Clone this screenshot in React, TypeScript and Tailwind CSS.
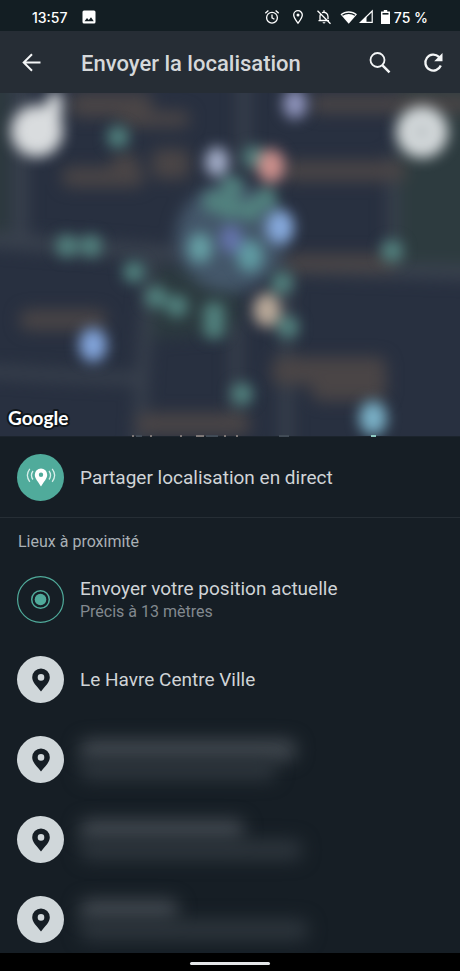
import type { ReactNode } from 'react';

const LABELS = [
  { x: 70, y: 0, w: 82, h: 24 },
  { x: 120, y: 18, w: 70, h: 16 },
  { x: 112, y: 60, w: 26, h: 24 },
  { x: 152, y: 56, w: 38, h: 30 },
  { x: 62, y: 74, w: 82, h: 20 },
  { x: 310, y: 2, w: 90, h: 18 },
  { x: 390, y: 2, w: 84, h: 18 },
  { x: 284, y: 68, w: 122, h: 20 },
  { x: 286, y: 161, w: 110, h: 18 },
  { x: 20, y: 217, w: 86, h: 20 },
  { x: 272, y: 264, w: 114, h: 28 },
  { x: 312, y: 280, w: 74, h: 28 },
  { x: 136, y: 320, w: 114, h: 22 },
];

const DOTS = [
  [118, 44], [67, 153], [91, 153], [134, 179], [156, 204], [177, 213],
  [214, 220], [214, 235], [242, 301], [288, 234], [282, 190], [392, 158],
  [254, 64], [232, 94], [214, 109], [230, 115], [250, 117], [266, 106],
];

const PINS = [
  { x: 295, y: 11, r: 12, fill: '#9095bd' },
  { x: 217, y: 69, r: 12, fill: '#a3adc8' },
  { x: 271, y: 73, r: 14, fill: '#cb8f8b' },
  { x: 280, y: 134, r: 14, fill: '#86a9dc' },
  { x: 93, y: 252, r: 14, fill: '#82a4da' },
  { x: 267, y: 217, r: 14, fill: '#b8a898' },
  { x: 373, y: 325, r: 14, fill: '#7ab0c6' },
  { x: 200, y: 155, r: 12, fill: '#66a0a5' },
  { x: 250, y: 163, r: 13, fill: '#609ba2' },
  { x: 231, y: 146, r: 11, fill: '#6473ab' },
];

const HIDDEN_PLACES = [
  { id: 'a', title: 'w-[216px]', address: 'w-[196px]' },
  { id: 'b', title: 'w-[164px]', address: 'w-[222px]' },
  { id: 'c', title: 'w-[98px]', address: 'w-[228px]' },
];

function StatusBar() {
  return (
    <div className="flex h-[31px] shrink-0 items-center justify-between bg-[#131e23] pr-8 pl-8 pt-1 font-['Inter','Roboto',sans-serif] text-sm font-medium text-white">
      <div className="flex items-center gap-[14px]">
        <span>13:57</span>
        <svg width="14" height="16" viewBox="0 0 14 16" aria-hidden="true">
          <rect x="0.5" y="0.5" width="13" height="13" rx="1.5" fill="#fff" />
          <path d="M2.5 11.3 5 8l1.8 2L9 7.2l2.8 4.1z" fill="#131e23" />
        </svg>
      </div>
      <div className="flex items-center">
        <svg width="16" height="18" viewBox="0 0 16 18" fill="none" stroke="#fff" strokeWidth="1.3" className="mr-3" aria-hidden="true">
          <circle cx="9" cy="8.7" r="5.4" />
          <path d="M9 5.5v3.4l2.4 1.4M2.3 4.2 5.4 1.6M15.7 4.2l-3.1-2.6" />
        </svg>
        <svg width="12" height="18" viewBox="0 0 12 18" fill="none" stroke="#fff" strokeWidth="1.3" className="mr-3" aria-hidden="true">
          <path d="M7 14.2C4.6 11 2.7 8.5 2.7 6a4.3 4.3 0 0 1 8.6 0c0 2.5-1.9 5-4.3 8.2z" />
          <circle cx="7" cy="6" r="1.5" fill="#fff" stroke="none" />
        </svg>
        <svg width="16" height="18" viewBox="0 0 16 18" fill="none" stroke="#fff" strokeWidth="1.3" className="mr-2 overflow-visible" aria-hidden="true">
          <path d="M5.3 5.5C5 6.2 5 7 5 7.5v4h8.5M3.5 11.7H14M7 3.8C9.5 2.4 13 4 13 7.5V10M9 1.3V3M2.5 1.8l13 13" />
          <path d="M7.6 13.2h2.8c0 1.6-2.8 1.6-2.8 0z" fill="#fff" stroke="none" />
        </svg>
        <svg width="18" height="18" viewBox="0 0 18 18" className="overflow-visible" aria-hidden="true">
          <path d="M1.500 5.200C6 1.300 13.500 1.300 18 5.200L9.700 14.800z" fill="#fff" />
          <path d="M3.500 6.200C7 3.700 12.500 3.700 16 6.200" fill="none" stroke="#131e23" strokeWidth="1.200" />
        </svg>
        <svg width="16" height="18" viewBox="0 0 16 18" className="mr-2" aria-hidden="true">
          <path d="M3.500 13.400 15.200 2v11.400z" fill="none" stroke="#fff" strokeWidth="1.200" />
          <path d="M2.500 14 9.500 7.100V14z" fill="#fff" />
        </svg>
        <svg width="9" height="18" viewBox="0 0 9 18" className="mr-1" aria-hidden="true">
          <path d="M2.800 1h3.400v1.400H9V15H0V2.400h2.800z" fill="#fff" />
          <rect x="1.500" y="4" width="6" height="1.600" fill="#131e23" />
        </svg>
        <span>75 %</span>
      </div>
    </div>
  );
}

function Header() {
  return (
    <header className="flex h-[62px] shrink-0 items-center bg-[#262d35] pt-[2px] pr-[15px] pl-[19px]">
      <button type="button" aria-label="Retour" className="flex size-6 items-center justify-center">
        <svg width="24" height="24" viewBox="0 0 24 24" fill="none" stroke="#f4f6f7" strokeWidth="2">
          <path d="M21.5 11.5H5M13 3.2 4.7 11.5l8.3 8.3" />
        </svg>
      </button>
      <h1 className="ml-[38px] flex-1 text-[22px] font-medium text-[#d5d8da]">Envoyer la localisation</h1>
      <button type="button" aria-label="Rechercher" className="flex size-6 items-center justify-center">
        <svg width="24" height="24" viewBox="0 0 24 24" fill="none" stroke="#f4f6f7">
          <circle cx="9.5" cy="9" r="7" strokeWidth="1.8" />
          <path d="m14.5 14.3 7 7" strokeWidth="2.5" />
        </svg>
      </button>
      <button type="button" aria-label="Actualiser" className="ml-[29px] flex size-6 items-center justify-center">
        <svg width="24" height="24" viewBox="0 0 24 24">
          <path d="M19.8 14.5a8 8 0 1 1-1.9-8.7l1.6 1.7" fill="none" stroke="#f4f6f7" strokeWidth="2.3" />
          <path d="M21.5 2v8.3h-8.3z" fill="#f4f6f7" />
        </svg>
      </button>
    </header>
  );
}

function MapView() {
  return (
    <section aria-label="Carte" className="relative h-[344px] shrink-0 overflow-hidden bg-[#283040]">
      <svg className="h-full w-full" viewBox="0 0 460 344" preserveAspectRatio="xMidYMid slice" aria-hidden="true">
        <defs>
          <filter id="soft" x="-20%" y="-20%" width="140%" height="140%" colorInterpolationFilters="sRGB">
            <feGaussianBlur stdDeviation="8" />
          </filter>
          <filter id="soft-pins" x="-20%" y="-20%" width="140%" height="140%" colorInterpolationFilters="sRGB">
            <feGaussianBlur stdDeviation="7" />
          </filter>
        </defs>
        <rect width="460" height="344" fill="#283040" />
        <g filter="url(#soft)">
          <path d="M-20-20h28v170h-28z" fill="#2d3a3e" />
          <path d="M398-20h90v192h-90z" fill="#2d3b3f" />
          <path d="M150 175h90v65l-90 6z" fill="#2c3a3f" />
          <g fill="none" stroke="#3a424e" strokeWidth="15">
            <path d="M20-20v165M-20 146l180 14 130 14 200 6" />
            <path d="M244-20v100M151 160l-7 100-6 100M236 230v110M-20 278l70 4 90 4M393 60v110M286 170v190" strokeWidth="11" />
          </g>
          <circle cx="230" cy="145" r="54" fill="#44576a" />
          <g fill="#4a4546">
            {LABELS.map((l) => (
              <rect key={`${l.x}-${l.y}`} x={l.x} y={l.y} width={l.w} height={l.h} rx="8" />
            ))}
          </g>
        </g>
        <g filter="url(#soft-pins)">
          <g fill="#52837f">
            {DOTS.map(([x, y]) => (
              <circle key={`${x}-${y}`} cx={x} cy={y} r="11" />
            ))}
          </g>
          {PINS.map((p) => (
            <ellipse key={`${p.x}-${p.y}`} cx={p.x} cy={p.y} rx={p.r} ry={p.r + 3} fill={p.fill} />
          ))}
        </g>
        <path d="M0 343h460v1H0z" fill="#1c242d" />
        <g fill="#7e7877">
          <path d="M132 342h2v2h-2zM150 342h2v2h-2zM180 342h2v2h-2zM196 342h8v2h-8zM224 342h2v2h-2zM236 342h2v2h-2z" />
          <path d="M136 342h6v2h-6zM206 342h12v2h-12zM279 342h10v2h-10z" fill="#414b56" />
          <path d="M371 342h5v2h-5z" fill="#8fc9c2" />
        </g>
      </svg>
      <button type="button" aria-label="Plein écran" className="absolute top-0 left-2">
        <svg width="62" height="72" viewBox="0 0 62 72" className="overflow-visible blur-[7px]">
          <circle cx="29" cy="38" r="26" fill="#d9dcde" />
          <path d="M42 0h12v20l-3 14-18-8z" fill="#d9dcde" />
        </svg>
      </button>
      <button type="button" aria-label="Ma position" className="absolute top-2 right-2">
        <svg width="60" height="60" viewBox="0 0 60 60" className="overflow-visible blur-[7px]">
          <circle cx="30" cy="31" r="26" fill="#d3d8da" />
          <circle cx="30" cy="31" r="5" fill="#a8b0b4" />
        </svg>
      </button>
      <svg width="70" height="30" viewBox="0 0 70 30" className="absolute bottom-1 left-1" role="img" aria-label="Google">
        <text
          x="4"
          y="22"
          fontFamily="Lato, sans-serif"
          fontSize="19"
          fontWeight="700"
          fill="#fff"
          stroke="#11171d"
          strokeWidth="4"
          strokeLinejoin="round"
          paintOrder="stroke"
        >
          Google
        </text>
      </svg>
    </section>
  );
}

function PinIcon() {
  return (
    <span className="flex size-[47px] shrink-0 items-center justify-center rounded-full bg-[#d0d7da]">
      <svg width="20" height="26" viewBox="0 0 20 26" aria-hidden="true">
        <path
          fillRule="evenodd"
          d="M10 1.5a8.800 8.800 0 0 0-8.800 8.800c0 5.200 4.400 8.500 8.800 14.200 4.400-5.700 8.800-9 8.800-14.200a8.800 8.800 0 0 0-8.800-8.800zm0 5.600a3.300 3.300 0 1 1 0 6.600 3.300 3.300 0 0 1 0-6.600z"
          fill="#161e25"
        />
      </svg>
    </span>
  );
}

function Row({ icon, children, label }: { icon: ReactNode; children: ReactNode; label?: string }) {
  return (
    <button type="button" aria-label={label} className="flex h-20 w-full shrink-0 items-center gap-4 px-[17px] pt-px text-left">
      {icon}
      <span className="flex min-w-0 flex-1 flex-col pt-px">{children}</span>
    </button>
  );
}

export default function App() {
  return (
    <div className="flex h-screen flex-col bg-[#161e25] font-['Roboto',sans-serif]">
      <StatusBar />
      <Header />
      <MapView />
      <main className="min-h-0 flex-1 overflow-y-auto [scrollbar-width:none]">
        <div className="border-b border-[#262e35]">
          <Row
            icon={
              <span className="flex size-[47px] shrink-0 items-center justify-center rounded-full bg-[#50ab9b]">
                <svg width="32" height="24" viewBox="0 0 32 24" fill="none" stroke="#d8efeb" strokeWidth="1.3" aria-hidden="true">
                  <path
                    fillRule="evenodd"
                    d="M16 2.5a6.2 6.2 0 0 0-6.2 6.2c0 4 3.2 6.5 6.2 11.8 3-5.3 6.2-7.8 6.2-11.800A6.200 6.200 0 0 0 16 2.500zm0 4a2.200 2.200 0 1 1 0 4.400 2.200 2.200 0 0 1 0-4.400z"
                    fill="#fff"
                    stroke="none"
                  />
                  <path d="M8 5c-1.800 2.400-1.800 6 0 8.500M24 5c1.800 2.400 1.800 6 0 8.500M4.800 2.800c-3 4-3 9 0 13M27.200 2.800c3 4 3 9 0 13" />
                </svg>
              </span>
            }
          >
            <span className="text-[19px] leading-6 text-[#d0d4d7]">Partager localisation en direct</span>
          </Row>
        </div>

        <h2 className="flex h-[41px] items-center px-[18px] pt-[7px] text-base text-[#a9b0b5]">Lieux à proximité</h2>

        <Row
          icon={
            <svg width="47" height="47" viewBox="0 0 47 47" fill="none" stroke="#50ab9b" className="shrink-0" aria-hidden="true">
              <circle cx="23.5" cy="23.5" r="22.9" strokeWidth="1.2" />
              <circle cx="23.5" cy="23.5" r="8.8" strokeWidth="1.5" />
              <circle cx="23.5" cy="23.5" r="5.8" fill="#50ab9b" stroke="none" />
            </svg>
          }
        >
          <span className="text-[19px] leading-6 text-[#d0d4d7]">Envoyer votre position actuelle</span>
          <span className="text-base leading-[22px] text-[#82898f]">Précis à 13 mètres</span>
        </Row>
        <Row icon={<PinIcon />}>
          <span className="text-[19px] leading-6 text-[#d0d4d7]">Le Havre Centre Ville</span>
        </Row>
        {HIDDEN_PLACES.map((place) => (
          <Row key={place.id} icon={<PinIcon />} label="Lieu masqué">
            <span className={`h-5 rounded-lg bg-[#444b52] blur-[9px] ${place.title}`} />
            <span className={`h-5 rounded-lg bg-[#2e363d] blur-[9px] ${place.address}`} />
          </Row>
        ))}
      </main>
      <div className="flex h-[18px] shrink-0 items-center justify-center bg-black pt-[2px]">
        <span className="h-[3px] w-20 rounded-full bg-[#e4e6e8]" />
      </div>
    </div>
  );
}
